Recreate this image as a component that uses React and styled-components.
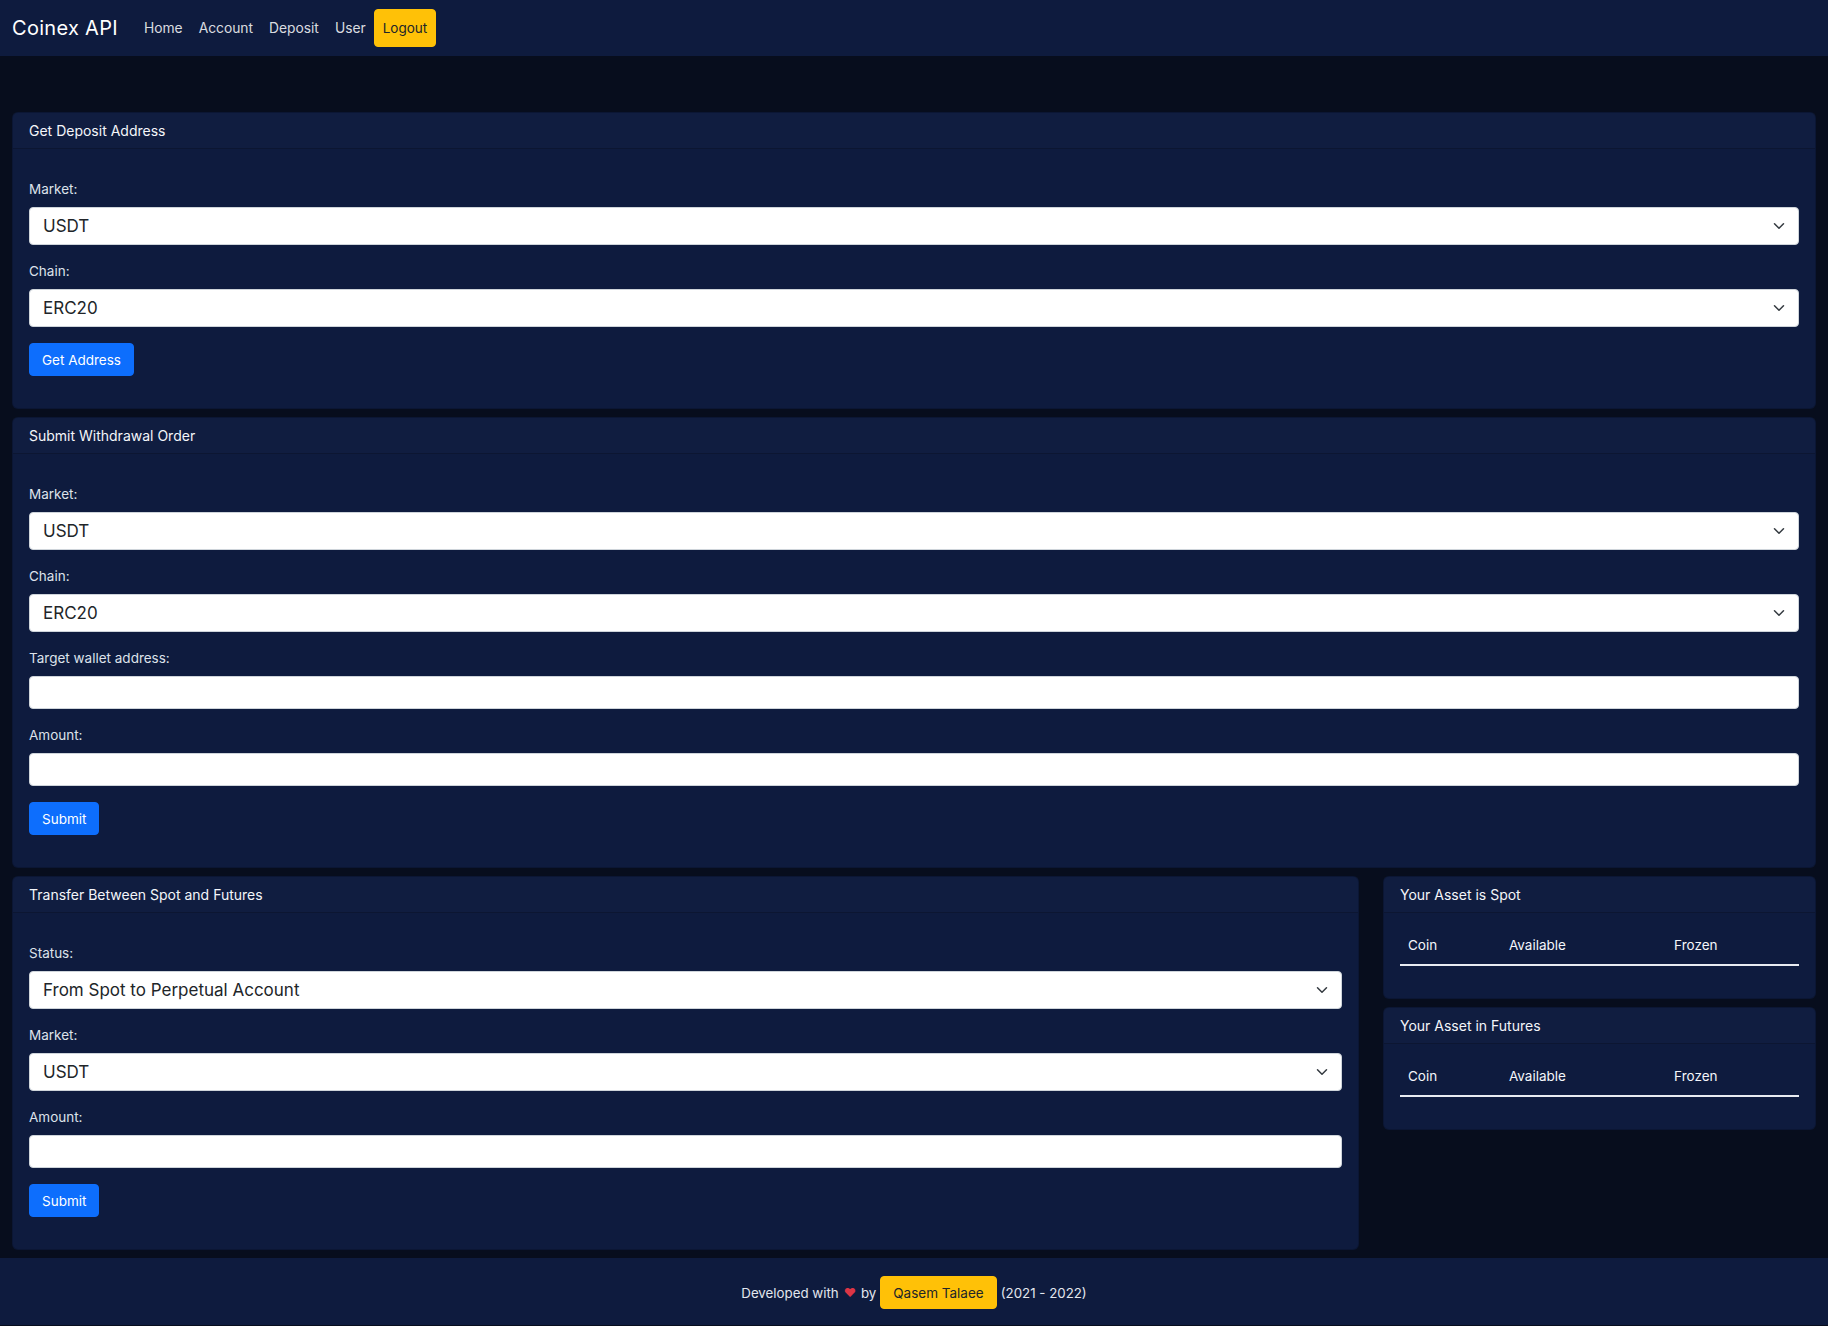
import React from "react";
import styled, { createGlobalStyle } from "styled-components";

const GlobalStyle = createGlobalStyle`
  * { box-sizing: border-box; }
  html, body { margin: 0; padding: 0; }
  body {
    background: #070d1d;
    font-family: Inter, "Open Sans", Arial, sans-serif;
    color: #e8ebf1;
  }
`;

const Navbar = styled.nav`
  height: 56px;
  background: #0e1b3e;
  display: flex;
  align-items: center;
  padding: 0 12px;
`;

const Brand = styled.a`
  font-size: 20px;
  color: #ffffff;
  margin-right: 18px;
  text-decoration: none;
  letter-spacing: 0.3px;
`;

const NavLink = styled.a`
  padding: 8px;
  font-size: 13.8px;
  color: rgba(255, 255, 255, 0.86);
  text-decoration: none;
`;

const YellowButton = styled.button`
  background: #ffc107;
  border: 1px solid #ffc107;
  border-radius: 4px;
  color: #212529;
  font-family: inherit;
  font-size: ${(p) => (p.$size === "sm" ? "13.5px" : "13.5px")};
  height: ${(p) => (p.$size === "sm" ? "33px" : "38px")};
  padding: 0 ${(p) => (p.$size === "sm" ? "12px" : "8px")};
  margin: ${(p) => (p.$size === "sm" ? "0 4px" : "0")};
  cursor: pointer;
`;

const Main = styled.main`
  padding: 56px 12px 0;
`;

const Card = styled.section`
  background: #0e1b3e;
  border: 1px solid rgba(0, 0, 0, 0.15);
  border-radius: 6px;
  margin-bottom: 8px;
`;

const CardHeader = styled.div`
  padding: 7px 16px;
  font-size: 14px;
  line-height: 21px;
  color: #f4f6fa;
  border-bottom: 1px solid rgba(0, 0, 0, 0.22);
  background: rgba(255, 255, 255, 0.01);
`;

const CardBody = styled.div`
  padding: ${(p) => (p.$table ? "14px 16px 16px" : "30px 16px 16px")};
`;

const Field = styled.div`
  margin-bottom: 16px;
`;

const Label = styled.label`
  display: block;
  font-size: 13.5px;
  line-height: 21px;
  margin-bottom: 7px;
  color: #dde2ea;
`;

const SelectWrap = styled.div`
  position: relative;
`;

const Select = styled.select`
  width: 100%;
  height: 38px;
  appearance: none;
  -webkit-appearance: none;
  background: #ffffff;
  border: 1px solid #ced4da;
  border-radius: 4px;
  padding: 0 36px 0 13px;
  font-family: inherit;
  font-size: 17px;
  color: #212529;
`;

const Chevron = styled.svg`
  position: absolute;
  right: 12px;
  top: 50%;
  width: 16px;
  height: 12px;
  margin-top: -6px;
  pointer-events: none;
`;

const Input = styled.input`
  display: block;
  width: 100%;
  height: 33px;
  background: #ffffff;
  border: 1px solid #ced4da;
  border-radius: 4px;
  padding: 0 12px;
  font-family: inherit;
  font-size: 14px;
`;

const Actions = styled.div`
  margin-bottom: 16px;
`;

const BlueButton = styled.button`
  background: #0d6efd;
  border: 1px solid #0d6efd;
  border-radius: 4px;
  color: #ffffff;
  font-family: inherit;
  font-size: 13.5px;
  height: 33px;
  padding: 0 12px;
  cursor: pointer;
`;

const Row = styled.div`
  display: grid;
  grid-template-columns: calc(75% - 6px) 1fr;
  column-gap: 24px;
  align-items: start;
`;

const Column = styled.div`
  display: flex;
  flex-direction: column;
`;

const Table = styled.table`
  width: 100%;
  border-collapse: collapse;
  margin-bottom: 16px;
`;

const Th = styled.th`
  text-align: left;
  font-weight: 400;
  font-size: 13.5px;
  line-height: 21px;
  padding: 8px;
  color: #f4f6fa;
  border-bottom: 2px solid #e8ebf1;
  width: ${(p) => p.$w || "auto"};
`;

const Footer = styled.footer`
  background: #0e1b3e;
  padding: 18px 0 16px;
  display: flex;
  justify-content: center;
  align-items: center;
  font-size: 13.3px;
  color: #e3e7ee;
`;

const Heart = styled.span`
  color: #dc3545;
  margin: 0 5px;
  font-size: 12px;
`;

function ChevronIcon() {
  return (
    <Chevron viewBox="0 0 16 16">
      <path d="M2 5l6 6 6-6" fill="none" stroke="#343a40" strokeWidth="2" strokeLinecap="round" strokeLinejoin="round" />
    </Chevron>
  );
}

function SelectField({ label, value }) {
  return (
    <Field>
      <Label>{label}</Label>
      <SelectWrap>
        <Select defaultValue={value}>
          <option>{value}</option>
        </Select>
        <ChevronIcon />
      </SelectWrap>
    </Field>
  );
}

function InputField({ label }) {
  return (
    <Field>
      <Label>{label}</Label>
      <Input type="text" />
    </Field>
  );
}

function AssetCard({ title }) {
  return (
    <Card>
      <CardHeader>{title}</CardHeader>
      <CardBody $table>
        <Table>
          <thead>
            <tr>
              <Th $w="25.3%">Coin</Th>
              <Th $w="41.4%">Available</Th>
              <Th>Frozen</Th>
            </tr>
          </thead>
          <tbody></tbody>
        </Table>
      </CardBody>
    </Card>
  );
}

export default function App() {
  return (
    <>
      <GlobalStyle />
      <Navbar>
        <Brand href="#">Coinex API</Brand>
        <NavLink href="#">Home</NavLink>
        <NavLink href="#">Account</NavLink>
        <NavLink href="#">Deposit</NavLink>
        <NavLink href="#">User</NavLink>
        <YellowButton>Logout</YellowButton>
      </Navbar>
      <Main>
        <Card>
          <CardHeader>Get Deposit Address</CardHeader>
          <CardBody>
            <SelectField label="Market:" value="USDT" />
            <SelectField label="Chain:" value="ERC20" />
            <Actions>
              <BlueButton>Get Address</BlueButton>
            </Actions>
          </CardBody>
        </Card>
        <Card>
          <CardHeader>Submit Withdrawal Order</CardHeader>
          <CardBody>
            <SelectField label="Market:" value="USDT" />
            <SelectField label="Chain:" value="ERC20" />
            <InputField label="Target wallet address:" />
            <InputField label="Amount:" />
            <Actions>
              <BlueButton>Submit</BlueButton>
            </Actions>
          </CardBody>
        </Card>
        <Row>
          <Card>
            <CardHeader>Transfer Between Spot and Futures</CardHeader>
            <CardBody>
              <SelectField label="Status:" value="From Spot to Perpetual Account" />
              <SelectField label="Market:" value="USDT" />
              <InputField label="Amount:" />
              <Actions>
                <BlueButton>Submit</BlueButton>
              </Actions>
            </CardBody>
          </Card>
          <Column>
            <AssetCard title="Your Asset is Spot" />
            <AssetCard title="Your Asset in Futures" />
          </Column>
        </Row>
      </Main>
      <Footer>
        Developed with<Heart>❤</Heart>by
        <YellowButton $size="sm">Qasem Talaee</YellowButton>
        (2021 - 2022)
      </Footer>
    </>
  );
}
